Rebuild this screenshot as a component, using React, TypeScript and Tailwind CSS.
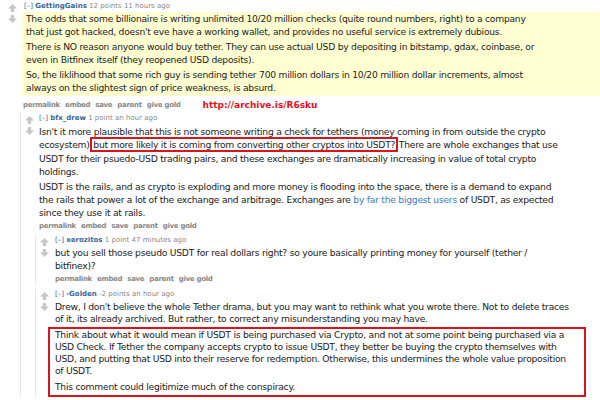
import React from "react";

const Arrows = () => (
  <div className="flex flex-col items-center w-[9px] gap-[3px] pt-[3px] shrink-0">
    <svg width="9" height="8" viewBox="0 0 9 8">
      <polygon points="4.5,0 9,4.5 6.2,4.5 6.2,8 2.8,8 2.8,4.5 0,4.5" fill="#c6c6c6" />
    </svg>
    <svg width="9" height="8" viewBox="0 0 9 8">
      <polygon points="4.5,8 9,3.5 6.2,3.5 6.2,0 2.8,0 2.8,3.5 0,3.5" fill="#c6c6c6" />
    </svg>
  </div>
);

const Tagline = ({ user, meta }: { user: string; meta: string }) => (
  <div className="text-[7px] leading-[11px] tracking-normal text-[#888] whitespace-nowrap">
    <span className="text-[#369]">[–]</span>{" "}
    <span className="font-bold text-[#369]">{user}</span>{" "}
    <span>{meta}</span>
  </div>
);

const Buttons = () => (
  <div className="flex gap-[5px] text-[7px] font-bold text-[#888] leading-[11px] tracking-[-0.3px]">
    <span>permalink</span>
    <span>embed</span>
    <span>save</span>
    <span>parent</span>
    <span>give gold</span>
  </div>
);

export default function App() {
  return (
    <div className="w-[600px] h-[400px] overflow-hidden bg-white text-[#222] font-['DejaVu_Sans',sans-serif] text-[9.2px] leading-[13.3px] tracking-[-0.25px]">
      <div className="flex pl-[8px] pt-[1px]">
        <Arrows />
        <div className="flex-1 ml-[5px]">
          <div className="pl-[2px]">
            <Tagline user="GettingGains" meta="12 points 11 hours ago" />
          </div>
          <div className="bg-[#ffffd2] pl-[4px] pb-[1px] whitespace-nowrap">
            <p>
              The odds that some billionaire is writing unlimited 10/20 million checks (quite round numbers, right) to a company
              <br />
              that just got hacked, doesn't eve have a working wallet, and provides no useful service is extremely dubious.
            </p>
            <p className="mt-[1.5px]">
              There is NO reason anyone would buy tether. They can use actual USD by depositing in bitstamp, gdax, coinbase, or
              <br />
              even in Bitfinex itself (they reopened USD deposits).
            </p>
            <p className="mt-[1.5px]">
              So, the liklihood that some rich guy is sending tether 700 million dollars in 10/20 million dollar increments, almost
              <br />
              always on the slightest sign of price weakness, is absurd.
            </p>
          </div>
          <div className="flex items-center mt-[3px] pl-[1px]">
            <Buttons />
            <span className="ml-[22px] text-[9px] font-bold text-[#e8101a] tracking-normal">http://archive.is/R6sku</span>
          </div>

          <div className="border-l border-[#e4e4ee] -ml-[2px] mt-[1px] pl-[4px] flex">
            <Arrows />
            <div className="flex-1 ml-[5px]">
              <div className="mb-[1px]">
                <Tagline user="bfx_drew" meta="1 point an hour ago" />
              </div>
              <div className="whitespace-nowrap">
                <p>
                  Isn't it more plausible that this is not someone writing a check for tethers (money coming in from outside the crypto
                  <br />
                  ecosystem){" "}
                  <span className="border-2 border-[#d8141c] px-[1px] -mx-[2px]">
                    but more likely it is coming from converting other cryptos into USDT?
                  </span>{" "}
                  There are whole exchanges that use
                  <br />
                  USDT for their psuedo-USD trading pairs, and these exchanges are dramatically increasing in value of total crypto
                  <br />
                  holdings.
                </p>
                <p className="mt-[1.5px]">
                  USDT is the rails, and as crypto is exploding and more money is flooding into the space, there is a demand to expand
                  <br />
                  the rails that power a lot of the exchange and arbitrage. Exchanges are{" "}
                  <span className="text-[#3a7cc0]">by far the biggest users</span> of USDT, as expected
                  <br />
                  since they use it at rails.
                </p>
              </div>
              <div className="mt-[1px]">
                <Buttons />
              </div>

              <div className="border-l border-[#e4e4ee] -ml-[4px] mt-[3px] pl-[4px] flex">
                <Arrows />
                <div className="flex-1 ml-[6px]">
                  <Tagline user="xerozitos" meta="1 point 47 minutes ago" />
                  <p className="whitespace-nowrap">
                    but you sell those pseudo USDT for real dollars right? so youre basically printing money for yourself (tether /
                    <br />
                    bitfinex)?
                  </p>
                  <div className="mt-[2px]">
                    <Buttons />
                  </div>
                </div>
              </div>

              <div className="border-l border-[#e4e4ee] -ml-[4px] mt-[4px] pl-[4px] flex">
                <Arrows />
                <div className="flex-1 ml-[6px]">
                  <Tagline user="-Golden" meta="-2 points an hour ago" />
                  <p className="whitespace-nowrap leading-[12px] mt-[1px]">
                    Drew, I don't believe the whole Tether drama, but you may want to rethink what you wrote there. Not to delete traces
                    <br />
                    of it, its already archived. But rather, to correct any misunderstanding you may have.
                  </p>
                  <div className="border-2 border-[#d8141c] -ml-[7px] w-[538px] pl-[5px] pb-[2px] mt-[2px] whitespace-nowrap leading-[12px]">
                    <p>
                      Think about what it would mean if USDT is being purchased via Crypto, and not at some point being purchased via a
                      <br />
                      USD Check. If Tether the company accepts crypto to issue USDT, they better be buying the crypto themselves with
                      <br />
                      USD, and putting that USD into their reserve for redemption. Otherwise, this undermines the whole value proposition
                      <br />
                      of USDT.
                    </p>
                    <p className="mt-[4px]">This comment could legitimize much of the conspiracy.</p>
                  </div>
                </div>
              </div>
            </div>
          </div>
        </div>
      </div>
    </div>
  );
}
